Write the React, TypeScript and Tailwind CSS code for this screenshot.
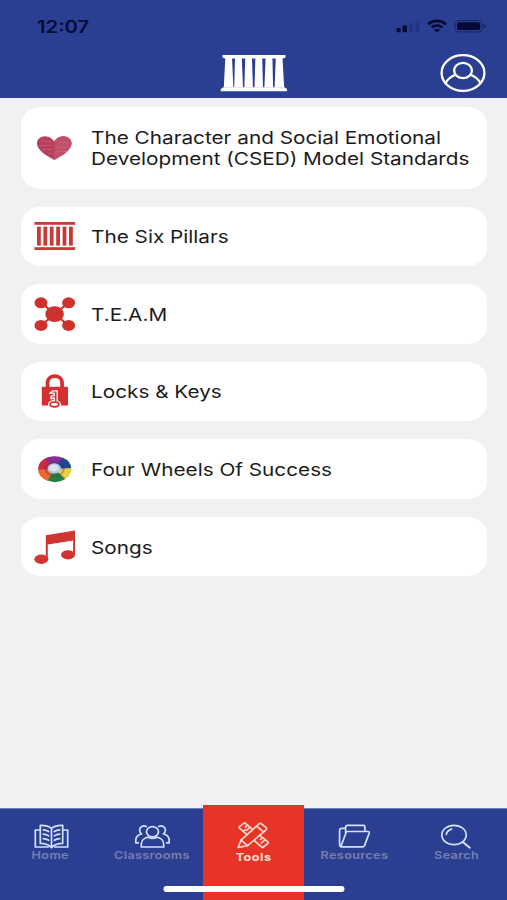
import clsx from "clsx";
import type { ReactNode } from "react";

function PillarsLogo() {
  return (
    <svg width="68" height="38" viewBox="0 0 68 38" fill="white">
      <path d="M2.5 1h63v2.4l-2.500 1h-58l-2.500-1z" />
      <path d="M3.500 33.200h61l2.500 1.700v2.300H.800v-2.300z" />
      <path d="M5.300 4h6.700l1.400 29.500H3.800z" />
      <path d="M15 4h6.800l1.200 29.500h-8.800z" />
      <path d="M25.200 4h6.800l.9 29.500h-8.500z" />
      <path d="M35.400 4h6.800l.8 29.500h-8.500z" />
      <path d="M45.600 4h6.800l.7 29.500h-8.700z" />
      <path d="M55.800 4h6.700l1.700 29.500h-9.600z" />
    </svg>
  );
}

function ProfileIcon() {
  return (
    <svg width="46" height="39" viewBox="0 0 46 39" fill="none" stroke="white" strokeWidth="2.3">
      <ellipse cx="23" cy="19" rx="21.400" ry="17.800" />
      <ellipse cx="23" cy="16.500" rx="8.900" ry="7.600" />
      <path d="M5.800 28.800c2-3.600 5.300-6.300 9.600-8M40.200 28.800c-2-3.600-5.300-6.300-9.600-8" />
    </svg>
  );
}

function StatusIcons() {
  return (
    <svg width="92" height="16" viewBox="0 0 92 16" fill="#050a35">
      <rect x="1.500" y="10" width="4.200" height="4.200" rx="1" />
      <rect x="7.600" y="7.500" width="4.400" height="6.700" rx="1" />
      <rect x="14" y="5.300" width="4" height="8.900" rx="1" opacity=".2" />
      <rect x="20.600" y="3" width="4" height="11.200" rx="1" opacity=".2" />
      <g fill="none" stroke="#050a35">
        <path d="M33 6.200c5-4.400 13-4.400 18 0" strokeWidth="2.600" />
        <path d="M36.600 9.400c3-2.600 7.800-2.600 10.800 0" strokeWidth="2.400" />
        <rect x="60.200" y="2.500" width="27" height="11.400" rx="3.500" strokeWidth="1" opacity=".5" />
      </g>
      <path d="M38.600 11.800c1.800-1.500 5-1.500 6.800 0L42 14.600z" />
      <rect x="62" y="4.300" width="23.200" height="7.800" rx="2" />
      <path d="M88.800 6c2.400.8 2.400 3.700 0 4.500z" opacity=".6" />
    </svg>
  );
}

function HeartIcon() {
  return (
    <svg width="42" height="36" viewBox="0 0 42 36">
      <path
        d="M20.200 29.900C12.500 25.900 3 20.200 3 13.500 3 9.200 6.500 6.300 11 6.300c4.200 0 7.400 2.300 9.200 5.200 1.800-2.900 5-5.200 9-5.200 4.600 0 8.300 2.900 8.300 7.200 0 6.700-9.600 12.400-17.300 16.400z"
        fill="#b8405e"
      />
      <path d="M20.200 11.500c1.800-2.900 5-5.200 9-5.200 4.600 0 8.300 2.900 8.300 7.200 0 6.700-9.600 12.400-17.300 16.400z" fill="#bf5068" />
      <path
        d="M7 11.500h10M5 15.500h14M24 12.500h11M22 17h14M8 19.500h11M23 21.500h10M14 23.500h11"
        stroke="#d07b8c"
        strokeWidth=".8"
        opacity=".5"
      />
    </svg>
  );
}

function PillarsIcon() {
  return (
    <svg width="42" height="36" viewBox="0 0 42 36" fill="#c83a37">
      <rect x="0.500" y="4" width="40.600" height="2.800" />
      <rect x="0.500" y="29.200" width="40.600" height="2.800" />
      <rect x="3" y="8.600" width="3.800" height="19" />
      <rect x="9.400" y="8.600" width="3.800" height="19" />
      <rect x="15.800" y="8.600" width="3.800" height="19" />
      <rect x="22.200" y="8.600" width="3.800" height="19" />
      <rect x="28.600" y="8.600" width="3.800" height="19" />
      <rect x="35" y="8.600" width="3.800" height="19" />
    </svg>
  );
}

function TeamIcon() {
  return (
    <svg width="42" height="36" viewBox="0 0 42 36" fill="#cc322e">
      <path d="M7 6.500l27.500 23M34.500 6.500L7 29.500" stroke="#cc322e" strokeWidth="2.200" />
      <ellipse cx="20.600" cy="18.100" rx="9.300" ry="7.900" />
      <ellipse cx="7" cy="6.800" rx="6.500" ry="5.500" />
      <ellipse cx="34.600" cy="6.800" rx="6.500" ry="5.500" />
      <ellipse cx="7" cy="29.400" rx="6.500" ry="5.500" />
      <ellipse cx="34.600" cy="29.400" rx="6.500" ry="5.500" />
    </svg>
  );
}

function LockIcon() {
  return (
    <svg width="42" height="36" viewBox="0 0 42 36">
      <path d="M13.500 16v-5.700c0-9.600 14.600-9.600 14.600 0V16" fill="none" stroke="#d42f31" strokeWidth="3.700" />
      <rect x="7.800" y="13.800" width="26.200" height="18.700" fill="#d42f31" />
      <ellipse cx="20.500" cy="31.300" rx="6.400" ry="4.200" fill="white" />
      <path
        d="M15.600 20.400l3-2.500h4.600v11.300h-2.900v-4.500l-3.200 1.200v-2.800l3.200-.7v-2.200h-2z"
        fill="#d42f31"
        stroke="white"
        strokeWidth="1.300"
        strokeLinejoin="round"
      />
      <ellipse cx="20.500" cy="31.500" rx="4.300" ry="2.300" fill="white" stroke="#d42f31" strokeWidth="1.700" />
    </svg>
  );
}

function WheelIcon() {
  return (
    <svg width="42" height="36" viewBox="0 0 42 36">
      <g transform="translate(20.700 18) scale(1.290 1)">
        <path d="M0 0L-9-9.200A12.900 12.900 0 0 1 7-10.800z" fill="#852d94" />
        <path d="M0 0L6-11.400A12.900 12.900 0 0 1 12.900 0z" fill="#21468f" />
        <path d="M0 0L12.900-1A12.900 12.900 0 0 1 8 10.100z" fill="#f0cc43" />
        <path d="M0 0L8.300 9.900A12.900 12.900 0 0 1-6.200 11.300z" fill="#287d42" />
        <path d="M0 0L-5.500 11.700A12.900 12.900 0 0 1-12.900 0z" fill="#ec682e" />
        <path d="M0 0L-12.900.6A12.900 12.900 0 0 1-7.500-10.500z" fill="#c72b46" />
        <circle r="7" fill="none" stroke="#2b3566" strokeWidth="1.600" opacity=".3" />
        <circle cx="-.300" cy="-.600" r="5.200" fill="#b4c9e3" />
        <circle cx="-.500" cy="-1" r="3.600" fill="#d6e3f0" />
      </g>
    </svg>
  );
}

function SongsIcon() {
  return (
    <svg width="42" height="36" viewBox="0 0 42 36" fill="#cf3531">
      <path d="M11.800 6.200L41 1.400v24.400h-1.900V11.400L13.800 15.400v15h-2z" />
      <ellipse cx="7.300" cy="30.200" rx="7" ry="4.700" />
      <ellipse cx="34" cy="25.800" rx="7" ry="4.600" />
    </svg>
  );
}

function NavIcon({ children, stroke = "#d3e0ff" }: { children: ReactNode; stroke?: string }) {
  return (
    <svg
      width="36"
      height="28"
      viewBox="0 0 36 28"
      fill="none"
      stroke={stroke}
      strokeWidth="1.700"
      strokeLinejoin="round"
      strokeLinecap="round"
    >
      {children}
    </svg>
  );
}

const tools = [
  {
    lines: ["The Character and Social Emotional", "Development (CSED) Model Standards"],
    icon: <HeartIcon />,
  },
  { lines: ["The Six Pillars"], icon: <PillarsIcon /> },
  { lines: ["T.E.A.M"], icon: <TeamIcon /> },
  { lines: ["Locks & Keys"], icon: <LockIcon /> },
  { lines: ["Four Wheels Of Success"], icon: <WheelIcon /> },
  { lines: ["Songs"], icon: <SongsIcon /> },
];

const navItems = [
  {
    label: "Home",
    icon: (
      <NavIcon>
        <path d="M18.500 6.400C15.500 4 11.500 3.200 7.300 3.400v18c4.200 0 8.200.8 11.200 4.300 3-3.500 7-4.300 11.200-4.300v-18c-4.200-.2-8.200.6-11.200 3zM18.500 6.400v19" />
        <path d="M7.300 8H2.300v17h12.900M21.800 25h12.900V8h-5" />
        <path d="M10.300 7.800c2.200.2 3.800.7 5.400 1.700M10.300 12.200c2.200.2 3.800.7 5.400 1.700M10.300 16.600c2.200.2 3.800.7 5.400 1.700M26.700 7.800c-2.200.2-3.800.7-5.400 1.700M26.700 12.200c-2.200.2-3.800.7-5.400 1.700M26.700 16.600c-2.200.2-3.800.7-5.400 1.700" />
      </NavIcon>
    ),
  },
  {
    label: "Classrooms",
    icon: (
      <NavIcon>
        <ellipse cx="18.500" cy="9.700" rx="6" ry="5.100" />
        <path d="M7.300 25v-2.800c0-3.500 2.900-6.400 7-7 2.500 1.300 5.900 1.300 8.400 0 4.100.6 7 3.500 7 7V25z" />
        <path d="M12.200 4.500C9.500 2.800 5.300 5 5.600 8.300c.1 1.700.8 2.900 1.900 3.700-3.600.8-5.700 3.200-5.700 6.200v2.600h2.500M24.800 4.500c2.700-1.700 6.900.5 6.600 3.800-.1 1.700-.8 2.900-1.900 3.700 3.600.8 5.700 3.200 5.700 6.200v2.600h-2.500" />
      </NavIcon>
    ),
  },
  {
    label: "Tools",
    active: true,
    icon: (
      <NavIcon stroke="#ffd8cf">
        {/* Ruler, hidden where the pencil crosses it */}
        <path d="M17.300 8.200L10.500 2.300c-.6-.5-1.200-.5-1.800 0L4.500 5.600c-.5.500-.5 1 0 1.500l7.200 6.300M25.100 14.600l7.700 6.200c.5.500.5 1 0 1.500l-4.300 3.700c-.6.500-1.200.5-1.800 0L19.100 19.500" />
        <path d="M12.500 4.300l-2 1.700M15 6.300l-3.600 3M27.500 16.700l-2 1.700M30 18.800l-3.500 3M10 8.800L8.500 10" />
        {/* Pencil */}
        <path d="M3.200 26.500l2.800-7.300L23.700 3.200c1-.9 2.200-.9 3.200 0l3.900 3.200c1 .9 1 1.900 0 2.800L12.600 24.600z" />
        <path d="M6 19.200l6.600 5.400M21.600 5.100l7 5.900" />
      </NavIcon>
    ),
  },
  {
    label: "Resources",
    icon: (
      <NavIcon>
        <path d="M4 24.300L9 10.700c.3-.8.900-1.200 1.700-1.200h20.100c1.100 0 1.700.6 1.400 1.600l-4.600 12.300c-.4 1-1 1.500-2 1.500H5c-1.600 0-2.400-.8-2.400-2.100V8.500c0-1.300.8-2.100 2.200-2.100h3.700M8.600 11V5c0-1 .6-1.600 1.600-1.600h16.100c1 0 1.600.6 1.600 1.600v4.500" />
      </NavIcon>
    ),
  },
  {
    label: "Search",
    icon: (
      <NavIcon>
        <ellipse cx="16" cy="13" rx="12.200" ry="9.700" />
        <path d="M24.800 20l7 5.700" strokeWidth="2" />
        <path d="M8.300 12.400c.5-2.600 2.500-4.500 5.300-5.300" />
      </NavIcon>
    ),
  },
];

function Header() {
  return (
    <header className="h-[98px] shrink-0 bg-[#2a3f92]">
      <div className="flex h-[52px] items-center justify-between pl-[37px] pr-[20px]">
        <span className="origin-left scale-x-[1.19] pt-[3px] text-[17px] font-semibold text-[#050a35]">12:07</span>
        <StatusIcons />
      </div>
      <div className="grid grid-cols-3 items-center px-5">
        <div className="col-start-2 flex justify-center pl-px pt-px">
          <PillarsLogo />
        </div>
        <div className="flex justify-end pr-px pt-[2px]">
          <ProfileIcon />
        </div>
      </div>
    </header>
  );
}

function BottomNav() {
  return (
    <nav className="relative grid h-[92px] shrink-0 grid-cols-5 border-t border-[#6f7db5] bg-[#2a3f92]">
      {navItems.map((item) => (
        <button
          key={item.label}
          type="button"
          className={clsx(
            "flex flex-col items-center",
            item.active ? "-mt-1 bg-[#e83427] pt-[16px] text-[#ffe0d8]" : "pt-[13px] text-[#7580af]"
          )}
        >
          {item.icon}
          <span
            className={clsx(
              "scale-x-[1.15] text-[11px] leading-[13px]",
              item.active ? "mt-[2px] font-bold tracking-[0.4px]" : "-mt-px font-semibold tracking-[0.3px]"
            )}
          >
            {item.label}
          </span>
        </button>
      ))}
      {/* Home indicator */}
      <div className="absolute bottom-2 left-1/2 h-[6px] w-[181px] -translate-x-1/2 rounded-full bg-white" />
    </nav>
  );
}

export default function App() {
  return (
    <div className="flex h-[900px] w-[507px] flex-col overflow-hidden bg-[#f1f1f4] font-['Inter',sans-serif]">
      <Header />
      <main className="flex flex-1 flex-col gap-[18px] pl-[21px] pr-[20px] pt-[9px]">
        {tools.map((tool) => (
          <div
            key={tool.lines[0]}
            className={clsx(
              "flex items-center gap-[15px] rounded-[20px/17px] bg-white pl-[13px]",
              tool.lines.length > 1 ? "h-[81.5px]" : "h-[59.6px]"
            )}
          >
            <div className="shrink-0">{tool.icon}</div>
            <div className="flex origin-left scale-x-[1.185] flex-col whitespace-nowrap pt-px text-[17.5px] leading-[21px] text-[#1b1b1d]">
              {tool.lines.map((line) => (
                <span key={line}>{line}</span>
              ))}
            </div>
          </div>
        ))}
      </main>
      <BottomNav />
    </div>
  );
}
